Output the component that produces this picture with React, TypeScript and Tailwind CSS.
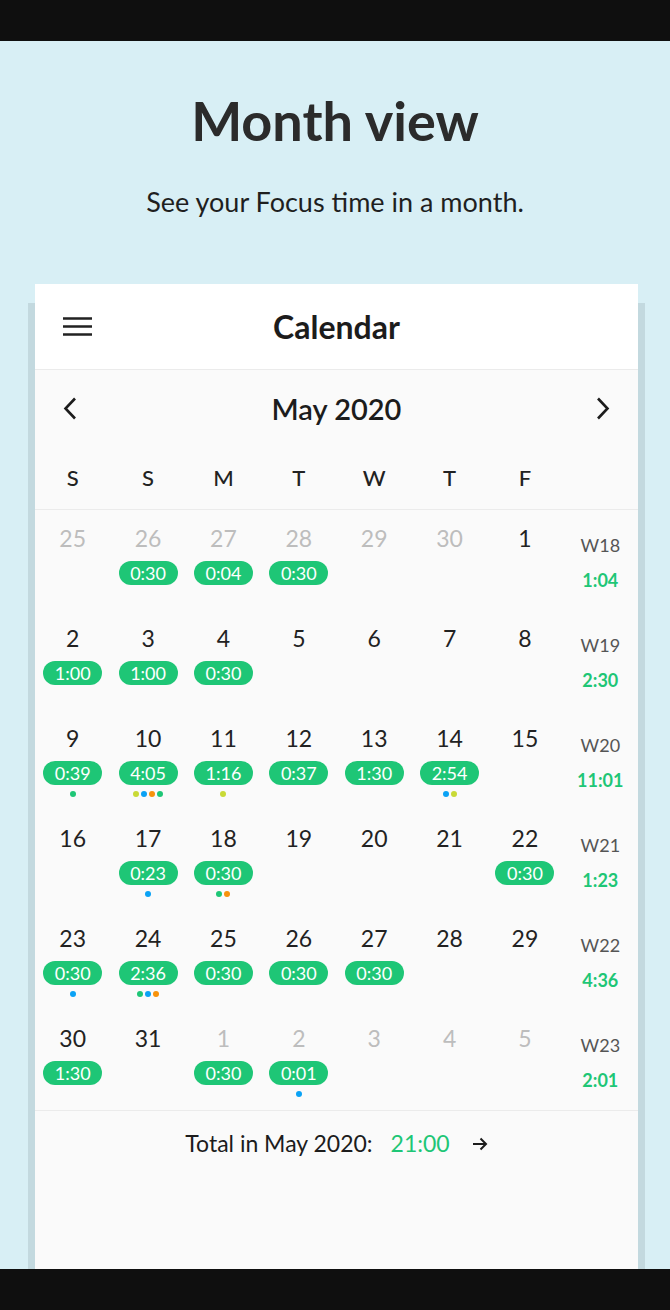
import React from 'react';

type Day = {
  n: number;
  muted?: boolean;
  time?: string;
  dots?: string[];
};

const G = '#1ec676';
const Y = '#c9da36';
const B = '#0aa2f5';
const O = '#f7920c';

const weeks: { label: string; total: string; days: Day[] }[] = [
  {
    label: 'W18',
    total: '1:04',
    days: [
      { n: 25, muted: true },
      { n: 26, muted: true, time: '0:30' },
      { n: 27, muted: true, time: '0:04' },
      { n: 28, muted: true, time: '0:30' },
      { n: 29, muted: true },
      { n: 30, muted: true },
      { n: 1 },
    ],
  },
  {
    label: 'W19',
    total: '2:30',
    days: [
      { n: 2, time: '1:00' },
      { n: 3, time: '1:00' },
      { n: 4, time: '0:30' },
      { n: 5 },
      { n: 6 },
      { n: 7 },
      { n: 8 },
    ],
  },
  {
    label: 'W20',
    total: '11:01',
    days: [
      { n: 9, time: '0:39', dots: [G] },
      { n: 10, time: '4:05', dots: [Y, B, O, G] },
      { n: 11, time: '1:16', dots: [Y] },
      { n: 12, time: '0:37' },
      { n: 13, time: '1:30' },
      { n: 14, time: '2:54', dots: [B, Y] },
      { n: 15 },
    ],
  },
  {
    label: 'W21',
    total: '1:23',
    days: [
      { n: 16 },
      { n: 17, time: '0:23', dots: [B] },
      { n: 18, time: '0:30', dots: [G, O] },
      { n: 19 },
      { n: 20 },
      { n: 21 },
      { n: 22, time: '0:30' },
    ],
  },
  {
    label: 'W22',
    total: '4:36',
    days: [
      { n: 23, time: '0:30', dots: [B] },
      { n: 24, time: '2:36', dots: [G, B, O] },
      { n: 25, time: '0:30' },
      { n: 26, time: '0:30' },
      { n: 27, time: '0:30' },
      { n: 28 },
      { n: 29 },
    ],
  },
  {
    label: 'W23',
    total: '2:01',
    days: [
      { n: 30, time: '1:30' },
      { n: 31 },
      { n: 1, muted: true, time: '0:30' },
      { n: 2, muted: true, time: '0:01', dots: [B] },
      { n: 3, muted: true },
      { n: 4, muted: true },
      { n: 5, muted: true },
    ],
  },
];

const weekdays = ['S', 'S', 'M', 'T', 'W', 'T', 'F'];

function DayCell({ day }: { day: Day }) {
  return (
    <div className="flex flex-col items-center pt-[17px]">
      <span className={`text-[23px] leading-none ${day.muted ? 'text-[#bdbdbd]' : 'text-[#222222]'}`}>{day.n}</span>
      {day.time && (
        <div className="mt-[11px] flex h-[24px] w-[59px] items-center justify-center rounded-full bg-[#1ec676] text-[18px] leading-none text-white">
          {day.time}
        </div>
      )}
      {day.dots && (
        <div className="mt-[6px] flex gap-[2px]">
          {day.dots.map((c, i) => (
            <span key={i} className="h-[6px] w-[6px] rounded-full" style={{ backgroundColor: c }} />
          ))}
        </div>
      )}
    </div>
  );
}

export default function App() {
  return (
    <div
      className="flex h-[1310px] flex-col overflow-hidden bg-[#d8eff5]"
      style={{ fontFamily: 'Lato, "Open Sans", sans-serif' }}
    >
      <div className="h-[41px] shrink-0 bg-[#0f0f0f]" />

      <div className="flex min-h-0 flex-1 flex-col">
        <h1 className="mt-[53px] text-center text-[54px] font-bold leading-none text-[#2b2b2b]">Month view</h1>
        <p className="mt-[40px] text-center text-[27px] leading-none text-[#1f1f1f]">See your Focus time in a month.</p>

        <div className="ml-[28px] mr-[25px] mt-[88px] flex flex-1 flex-col bg-[#c3d9df] px-[7px]">
          <div className="-mt-[19px] flex flex-1 flex-col bg-[#fafafa]">
            {/* header */}
            <div className="grid h-[86px] grid-cols-[1fr_auto_1fr] items-center border-b border-[#ebebeb] bg-white">
              <div className="pl-[28px]">
                <svg width="29" height="20" viewBox="0 0 29 20" className="text-[#222]">
                  <path d="M0 1.5H29M0 9.5H29M0 17.5H29" stroke="currentColor" strokeWidth="2.6" />
                </svg>
              </div>
              <h2 className="text-[32px] font-bold leading-none text-[#1c1c1c]">Calendar</h2>
              <div />
            </div>

            {/* month nav */}
            <div className="flex h-[76px] items-center justify-between px-[28px]">
              <svg width="14" height="23" viewBox="0 0 14 23" className="text-[#1c1c1c]">
                <path d="M12 1.5L2.5 11.5L12 21.5" fill="none" stroke="currentColor" strokeWidth="2.6" />
              </svg>
              <span className="text-[29px] font-semibold leading-none text-[#1c1c1c]">May 2020</span>
              <svg width="14" height="23" viewBox="0 0 14 23" className="text-[#1c1c1c]">
                <path d="M2 1.5L11.5 11.5L2 21.5" fill="none" stroke="currentColor" strokeWidth="2.6" />
              </svg>
            </div>

            {/* weekdays */}
            <div className="grid h-[64px] grid-cols-8 items-center border-b border-[#ebebeb]">
              {weekdays.map((w, i) => (
                <span key={i} className="text-center text-[22px] font-medium leading-none text-[#222222]">
                  {w}
                </span>
              ))}
              <span />
            </div>

            {/* weeks */}
            {weeks.map((week) => (
              <div key={week.label} className="grid h-[100px] grid-cols-8">
                {week.days.map((d, i) => (
                  <DayCell key={i} day={d} />
                ))}
                <div className="flex flex-col items-center pt-[26px]">
                  <span className="text-[18px] leading-none text-[#555555]">{week.label}</span>
                  <span className="mt-[17px] text-[18px] font-bold leading-none text-[#1ec676]">{week.total}</span>
                </div>
              </div>
            ))}

            {/* total */}
            <div className="flex items-center justify-center border-t border-[#ebebeb] pt-[21px] text-[23px] leading-none">
              <span className="text-[#1c1c1c]">Total in May 2020:</span>
              <span className="ml-[18px] text-[#1ec676]">21:00</span>
              <svg width="16" height="14" viewBox="0 0 16 14" className="ml-[22px] text-[#1c1c1c]">
                <path d="M1 7H14M8.5 1.5L14 7L8.5 12.5" fill="none" stroke="currentColor" strokeWidth="2" />
              </svg>
            </div>
          </div>
        </div>
      </div>

      <div className="h-[41px] shrink-0 bg-[#0f0f0f]" />
    </div>
  );
}
